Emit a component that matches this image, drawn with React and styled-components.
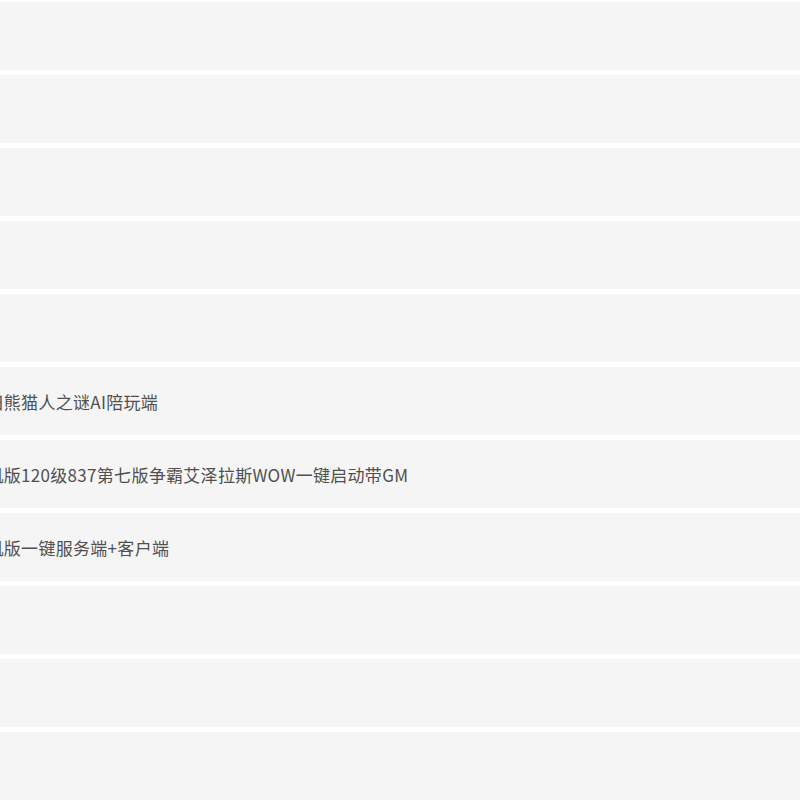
import styled, { createGlobalStyle } from "styled-components";

const GlobalStyle = createGlobalStyle`
  html, body {
    margin: 0;
    padding: 0;
    background: #ffffff;
    overflow: hidden;
  }
  body {
    font-family: "Noto Sans CJK SC", "Noto Sans", "Liberation Sans", sans-serif;
  }
`;

const resources = [
  { id: 1, title: "" },
  { id: 2, title: "" },
  { id: 3, title: "" },
  { id: 4, title: "" },
  { id: 5, title: "" },
  { id: 6, title: "魔兽世界怀旧熊猫人之谜AI陪玩端" },
  { id: 7, title: "魔兽世界单机版120级837第七版争霸艾泽拉斯WOW一键启动带GM" },
  { id: 8, title: "魔兽世界单机版一键服务端+客户端" },
  { id: 9, title: "" },
  { id: 10, title: "" },
  { id: 11, title: "" },
];

export default function App() {
  return (
    <>
      <GlobalStyle />
      <Page>
        <List>
          {resources.map(({ id, title }) => (
            <Row key={id}>
              <Title>{title}</Title>
            </Row>
          ))}
        </List>
      </Page>
    </>
  );
}

const Page = styled.div`
  width: 800px;
  height: 800px;
  overflow: hidden;
  padding-top: 2px;
  box-sizing: border-box;
`;

const List = styled.ul`
  list-style: none;
  margin: 0 0 0 -114px;
  padding: 0;
  display: flex;
  flex-direction: column;
  gap: 5px;
`;

const Row = styled.li`
  height: 68px;
  background: #f5f5f5;
  display: flex;
  align-items: center;
  padding: 0 14px;
`;

const Title = styled.span`
  font-size: 17px;
  letter-spacing: 0.3px;
  line-height: 20px;
  color: #505050;
  white-space: nowrap;
  padding-top: 1px;
`;
